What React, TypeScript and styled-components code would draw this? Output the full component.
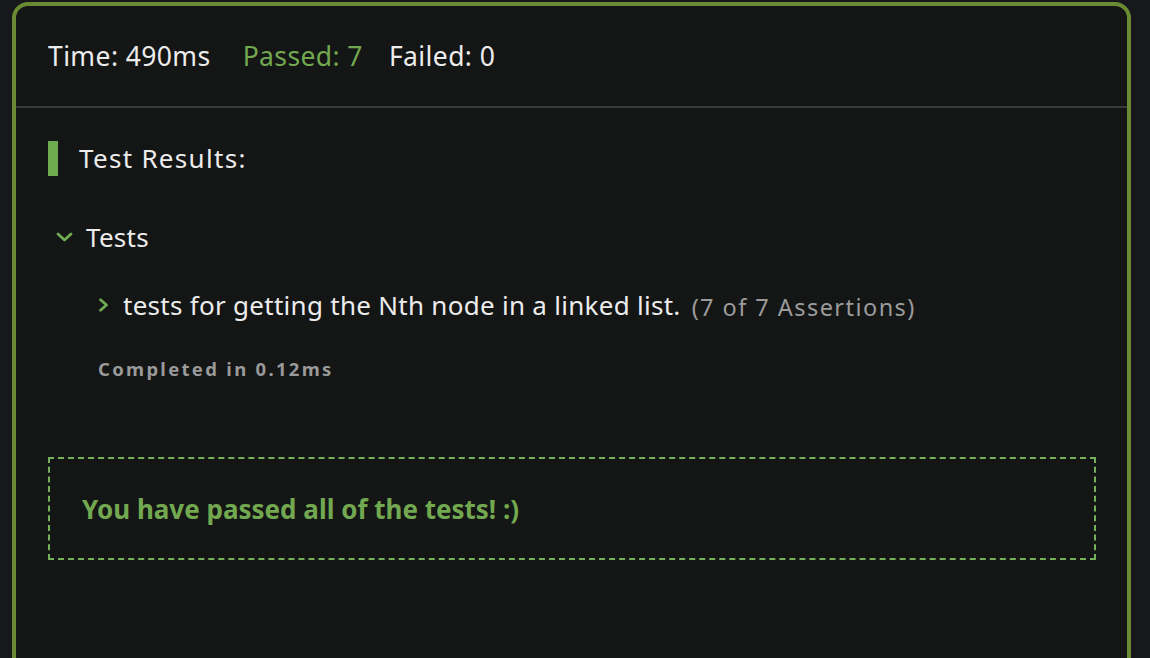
import React from "react";
import styled, { createGlobalStyle } from "styled-components";

const Global = createGlobalStyle`
  html, body { margin: 0; padding: 0; background: #17181c; }
  body { font-family: "Noto Sans", "Open Sans", sans-serif; }
`;

const Page = styled.div`
  width: 1150px;
  height: 658px;
  overflow: hidden;
  padding: 2px 19px 0 12px;
  box-sizing: border-box;
  background: #17181c;
`;

const Panel = styled.div`
  height: 700px;
  border: 4px solid #6a8a34;
  border-radius: 16px;
  background: #141515;
  box-sizing: border-box;
  display: flex;
  flex-direction: column;
`;

const Header = styled.div`
  height: 100px;
  display: flex;
  align-items: center;
  gap: 32px;
  padding: 0 0 0 32px;
  border-bottom: 2px solid #3a3b3b;
  font-size: 26.5px;
  letter-spacing: 0.4px;
  line-height: 1;
  color: #ececec;
`;

const Stat = styled.span<{ $green?: boolean; $tight?: boolean }>`
  color: ${(p) => (p.$green ? "#72a850" : "#ececec")};
  margin-left: ${(p) => (p.$tight ? "-6px" : "0")};
`;

const Body = styled.div`
  padding: 32px 31px 0 32px;
  display: flex;
  flex-direction: column;
`;

const Title = styled.div`
  display: flex;
  align-items: center;
  gap: 21px;
  font-size: 26px;
  letter-spacing: 1.3px;
  color: #ececec;
  height: 36px;
`;

const Bar = styled.span`
  width: 10px;
  height: 35px;
  background: #6fab50;
`;

const Row = styled.div<{ $indent: number; $gap: number; $top: number }>`
  display: flex;
  align-items: center;
  height: 36px;
  gap: ${(p) => p.$gap}px;
  margin-top: ${(p) => p.$top}px;
  padding-left: ${(p) => p.$indent}px;
  color: #ececec;
  font-size: 26px;
  letter-spacing: 0.28px;
  white-space: nowrap;
`;

const Sub = styled.span`
  color: #9b9b9b;
  font-size: 23.5px;
  letter-spacing: 1.45px;
  margin-left: -3px;
  padding-top: 4px;
`;

const Completed = styled.div`
  margin: 34px 0 0 50px;
  height: 24px;
  line-height: 24px;
  font-size: 18.5px;
  font-weight: 700;
  letter-spacing: 2.3px;
  color: #999a9a;
`;

const SuccessBox = styled.div`
  margin-top: 76px;
  height: 103px;
  border: 2px dashed #74b15a;
  box-sizing: border-box;
  display: flex;
  align-items: center;
  padding-left: 32px;
  font-size: 26px;
  font-weight: 700;
  color: #72a850;
`;

const ChevronDown = () => (
  <svg width="17" height="10" viewBox="0 0 17 10" fill="none">
    <path
      d="M2 2 L8.5 8 L15 2"
      stroke="#6fab50"
      strokeWidth="2.8"
      strokeLinecap="round"
      strokeLinejoin="round"
    />
  </svg>
);

const ChevronRight = () => (
  <svg width="11" height="14" viewBox="0 0 11 14" fill="none">
    <path
      d="M2.5 1.8 L8.5 7 L2.5 12.2"
      stroke="#6fab50"
      strokeWidth="2.8"
      strokeLinecap="round"
      strokeLinejoin="round"
    />
  </svg>
);

export default function App() {
  return (
    <Page>
      <Global />
      <Panel>
        <Header>
          <Stat>Time: 490ms</Stat>
          <Stat $green>Passed: 7</Stat>
          <Stat $tight>Failed: 0</Stat>
        </Header>
        <Body>
          <Title>
            <Bar />
            Test Results:
          </Title>
          <Row $indent={8} $gap={13} $top={43}>
            <ChevronDown />
            Tests
          </Row>
          <Row $indent={50} $gap={14} $top={32}>
            <ChevronRight />
            tests for getting the Nth node in a linked list.
            <Sub>(7 of 7 Assertions)</Sub>
          </Row>
          <Completed>Completed in 0.12ms</Completed>
          <SuccessBox>You have passed all of the tests! :)</SuccessBox>
        </Body>
      </Panel>
    </Page>
  );
}
